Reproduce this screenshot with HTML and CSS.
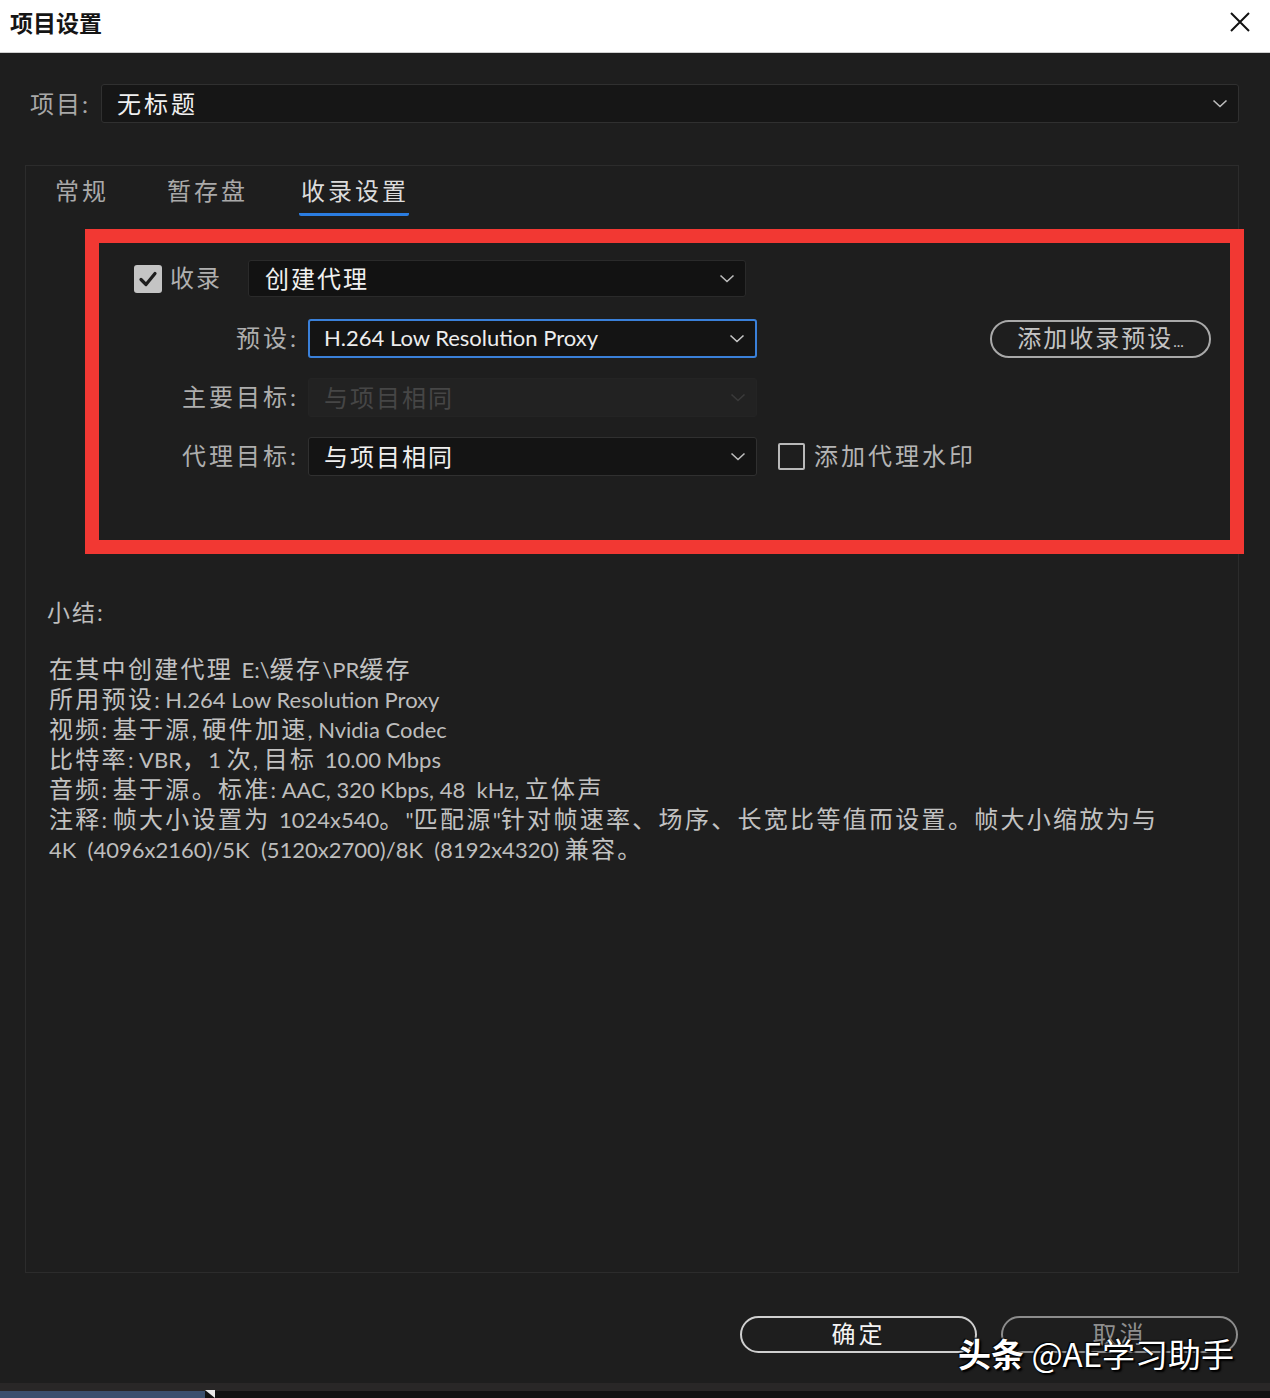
FILE: index.html
```html
<!DOCTYPE html>
<html lang="zh-CN">
<head>
<meta charset="utf-8">
<title>项目设置</title>
<link rel="stylesheet" href="styles.css">
</head>
<body>
<div class="page">
  <header class="titlebar">
    <h1 class="title">项目设置</h1>
    <svg class="close" width="22" height="22" viewBox="0 0 22 22"><path d="M2 2 L20 20 M20 2 L2 20" stroke="#111" stroke-width="2" fill="none"/></svg>
  </header>

  <main class="main">
    <div class="project-row">
      <span class="project-label">项目<span class="l">:</span></span>
      <div class="select project-select">
        <span class="value">无标题</span>
        <svg class="chev" width="16" height="9" viewBox="0 0 16 9"><path d="M1.5 1.5 L8 7.5 L14.5 1.5" stroke="#bdbdbd" stroke-width="1.6" fill="none"/></svg>
      </div>
    </div>

    <section class="panel">
      <nav class="tabs">
        <span class="tab">常规</span>
        <span class="tab">暂存盘</span>
        <span class="tab active">收录设置</span>
      </nav>

      <div class="highlight">
        <div class="row row-first">
          <span class="checkbox checked">
            <svg width="28" height="28" viewBox="0 0 28 28"><path d="M7 14.5 L12 19.5 L21 8.5" stroke="#1e1e1e" stroke-width="3.2" fill="none" stroke-linecap="round" stroke-linejoin="round"/></svg>
          </span>
          <span class="label-text">收录</span>
          <div class="select ingest-select">
            <span class="value">创建代理</span>
            <svg class="chev" width="16" height="9" viewBox="0 0 16 9"><path d="M1.5 1.5 L8 7.5 L14.5 1.5" stroke="#bdbdbd" stroke-width="1.6" fill="none"/></svg>
          </div>
        </div>

        <div class="row">
          <span class="row-label">预设<span class="l">:</span></span>
          <div class="select field focused">
            <span class="value l">H.264 Low Resolution Proxy</span>
            <svg class="chev" width="16" height="9" viewBox="0 0 16 9"><path d="M1.5 1.5 L8 7.5 L14.5 1.5" stroke="#c8c8c8" stroke-width="1.6" fill="none"/></svg>
          </div>
          <button class="pill add-preset">添加收录预设<span class="dots">...</span></button>
        </div>

        <div class="row">
          <span class="row-label">主要目标<span class="l">:</span></span>
          <div class="select field disabled">
            <span class="value">与项目相同</span>
            <svg class="chev" width="16" height="9" viewBox="0 0 16 9"><path d="M1.5 1.5 L8 7.5 L14.5 1.5" stroke="#3a3a3a" stroke-width="1.6" fill="none"/></svg>
          </div>
        </div>

        <div class="row">
          <span class="row-label">代理目标<span class="l">:</span></span>
          <div class="select field">
            <span class="value">与项目相同</span>
            <svg class="chev" width="16" height="9" viewBox="0 0 16 9"><path d="M1.5 1.5 L8 7.5 L14.5 1.5" stroke="#bdbdbd" stroke-width="1.6" fill="none"/></svg>
          </div>
          <span class="checkbox empty"></span>
          <span class="label-text watermark-label">添加代理水印</span>
        </div>
      </div>

      <div class="summary">
        <p class="sum-title">小结<span class="l">:</span></p>
        <div class="sum-lines">
          <p>在其中创建代理 <span class="l">E:\</span>缓存<span class="l">\PR</span>缓存</p>
          <p>所用预设<span class="l">: H.264 Low Resolution Proxy</span></p>
          <p>视频<span class="l">: </span>基于源<span class="l">, </span>硬件加速<span class="l">, Nvidia Codec</span></p>
          <p>比特率<span class="l">: VBR</span>，<span class="l">1 </span>次<span class="l">, </span>目标 <span class="l">10.00 Mbps</span></p>
          <p>音频<span class="l">: </span>基于源。标准<span class="l">: AAC, 320 Kbps, 48&nbsp; kHz, </span>立体声</p>
          <p>注释<span class="l">: </span>帧大小设置为 <span class="l">1024x540</span>。<span class="l">"</span>匹配源<span class="l">"</span>针对帧速率、场序、长宽比等值而设置。帧大小缩放为与</p>
          <p><span class="l">4K&nbsp; (4096x2160)/5K&nbsp; (5120x2700)/8K&nbsp; (8192x4320) </span>兼容。</p>
        </div>
      </div>
    </section>

    <div class="actions">
      <button class="pill btn ok">确定</button>
      <button class="pill btn cancel">取消</button>
      <div class="wm"><b>头条</b> @AE学习助手</div>
    </div>
  </main>

  <footer class="bottom">
    <div class="bottom-line"></div>
    <div class="taskbar">
      <div class="task-active"></div>
      <svg class="corner" width="10" height="8" viewBox="0 0 10 8"><path d="M0 0 L10 0 L10 8 Z" fill="#e8e8e8"/></svg>
    </div>
  </footer>
</div>
</body>
</html>
```

FILE: styles.css
```css
* { box-sizing: border-box; }
html, body { margin: 0; padding: 0; }
body {
  background: #1e1e1e;
  font-family: "Lato", "Noto Sans CJK SC", sans-serif;
  color: #b8b8b8;
}
p { margin: 0; }
.page {
  width: 1270px;
  height: 1398px;
  display: flex;
  flex-direction: column;
  overflow: hidden;
  background: #1e1e1e;
}
.l { font-family: "Lato", sans-serif; letter-spacing: 0; font-size: 22px; }

.titlebar {
  height: 53px;
  flex: none;
  background: #ffffff;
  border-bottom: 1px solid #cfcfcf;
  display: flex;
  align-items: center;
  justify-content: space-between;
  padding: 0 19px 0 10px;
}
.title {
  margin: 0;
  font-family: "Noto Sans CJK SC", sans-serif;
  font-size: 23px;
  font-weight: 700;
  color: #151515;
  letter-spacing: 0;
  margin-top: -8px;
}
.close { margin-top: -8px; }

.main {
  flex: 1;
  position: relative;
  padding: 31px 31px 0 25px;
  display: flex;
  flex-direction: column;
}

.project-row {
  display: flex;
  align-items: center;
  height: 39px;
  padding-left: 5px;
}
.project-label {
  width: 71px;
  font-size: 24px;
  letter-spacing: 2px;
  color: #a8a8a8;
  margin-top: -3px;
}
.project-label .l { font-size: 24px; }

.select {
  display: flex;
  align-items: center;
  justify-content: space-between;
  border-radius: 3px;
  background: #161616;
  border: 1px solid #303030;
  color: #f0f0f0;
  font-size: 24px;
  letter-spacing: 2px;
}
.select .value { margin-top: -3px; }
.project-select {
  flex: 1;
  height: 39px;
  padding: 0 10px 0 15px;
}
.project-select .value { letter-spacing: 3px; }

.panel {
  margin-top: 42px;
  width: 1214px;
  height: 1108px;
  border: 1px solid #2c2c2c;
  flex: none;
  display: flex;
  flex-direction: column;
}
.tabs {
  display: flex;
  gap: 58px;
  padding: 8px 0 0 29px;
  height: 52px;
}
.tab {
  font-size: 24px;
  letter-spacing: 3px;
  color: #a9a9a9;
  height: 42px;
  line-height: 34px;
}
.tab.active {
  color: #dcdcdc;
  border-bottom: 3px solid #2b7de1;
  padding: 0 0 0 2px;
  margin-left: -7px;
  border-radius: 0 0 2px 2px;
}

.highlight {
  margin: 11px 0 0 59px;
  width: 1159px;
  height: 325px;
  border: 14px solid #f23833;
  padding: 17px 19px 0 35px;
  display: flex;
  flex-direction: column;
  gap: 20px;
}
.row {
  display: flex;
  align-items: center;
  height: 39px;
}
.row-first { height: 37px; gap: 0; margin-bottom: 2px; }
.checkbox {
  width: 28px;
  height: 28px;
  flex: none;
  border-radius: 3px;
}
.checkbox.checked { background: #c4c4c4; }
.checkbox.checked svg { display: block; }
.checkbox.empty {
  width: 27px;
  height: 27px;
  border: 2.5px solid #b9b9b9;
  margin-left: 21px;
  border-radius: 2px;
}
.label-text {
  font-size: 24px;
  letter-spacing: 2px;
  color: #b0b0b0;
  margin-left: 8px;
  margin-top: -4px;
}
.ingest-select {
  margin-left: 26px;
  width: 498px;
  height: 37px;
  background: #121212;
  border-color: #2a2a2a;
  padding: 0 10px 0 16px;
}
.row-label {
  width: 162px;
  text-align: right;
  font-size: 24px;
  letter-spacing: 3px;
  color: #aeaeae;
  margin-right: 12px;
  margin-top: -4px;
  flex: none;
}
.row-label .l { font-size: 24px; }
.field {
  width: 449px;
  height: 39px;
  padding: 0 10px 0 15px;
  background: #141414;
  flex: none;
}
.field.focused {
  border: 2px solid #3a80d9;
  padding-left: 14px;
}
.field.focused .value { font-size: 22px; color: #ededed; }
.field.disabled {
  background: #222222;
  border-color: #242424;
  color: #464646;
}
.pill {
  font-family: "Noto Sans CJK SC", sans-serif;
  background: transparent;
  border-radius: 19px;
  cursor: default;
}
.add-preset {
  margin-left: auto;
  width: 221px;
  height: 38px;
  border: 2px solid #a9a9a9;
  color: #c4c4c4;
  font-size: 24px;
  letter-spacing: 2px;
  padding: 0 0 4px 0;
  line-height: 30px;
}
.add-preset .dots { font-family: "Lato", sans-serif; font-size: 15px; letter-spacing: 0; }
.watermark-label { margin-left: 9px; color: #b4b4b4; letter-spacing: 3px; }

.summary {
  padding: 43px 0 0 21px;
}
.sum-title {
  font-size: 23px;
  letter-spacing: 2px;
  line-height: 30px;
  height: 30px;
  color: #bcbcbc;
}
.sum-title .l { font-size: 23px; }
.sum-lines {
  margin-top: 27px;
  padding-left: 2px;
}
.sum-lines p {
  font-size: 24px;
  letter-spacing: 2.3px;
  line-height: 30px;
  height: 30px;
  color: #c2c2c2;
  white-space: nowrap;
}
.sum-lines .l { font-size: 22px; color: #bdbdbd; letter-spacing: 0; }

.actions {
  display: flex;
  justify-content: flex-end;
  gap: 24px;
  margin-top: 43px;
  padding-right: 1px;
  position: relative;
}
.btn {
  width: 237px;
  height: 37px;
  font-size: 24px;
  letter-spacing: 3px;
  line-height: 30px;
  padding: 0 0 4px 0;
}
.ok { border: 2px solid #cfcfcf; color: #f4f4f4; }
.cancel { border: 2px solid #8c8c8c; color: #8e8e8e; padding-bottom: 8px; }
.wm {
  position: absolute;
  left: 933px;
  top: 13px;
  font-family: "Noto Sans CJK SC", sans-serif;
  font-size: 33px;
  color: #ffffff;
  letter-spacing: 0;
  text-shadow: 1px 1px 1px #000, -1px -1px 1px #000, 2px 2px 2px #000;
  white-space: nowrap;
}
.wm b { font-weight: 700; }

.bottom { flex: none; }
.bottom-line { height: 8px; background: #292727; }
.taskbar {
  height: 7px;
  background: #121212;
  display: flex;
  align-items: flex-start;
}
.task-active { width: 205px; height: 7px; background: #3b4f6d; }
.corner { margin-top: -1px; }
```
